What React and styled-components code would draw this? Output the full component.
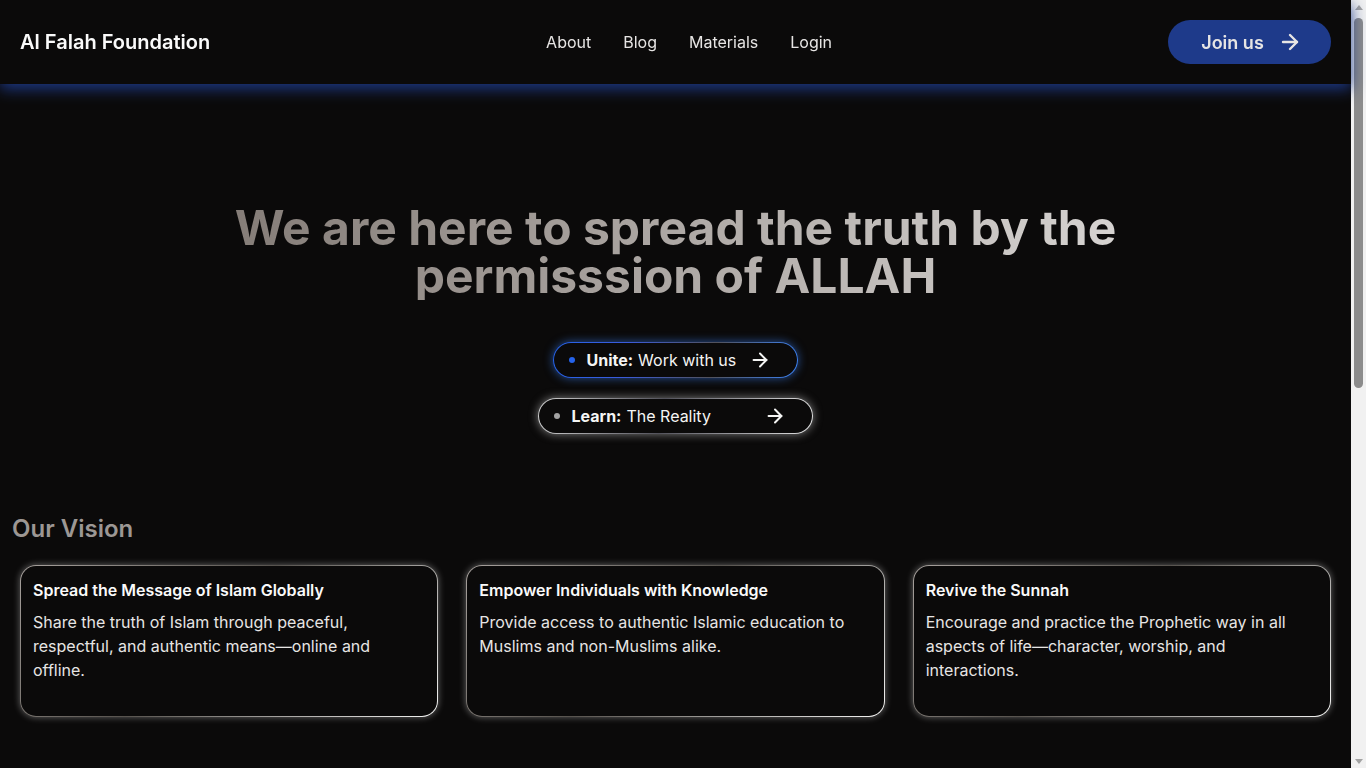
import styled, { createGlobalStyle } from "styled-components";
import { ArrowRight } from "lucide-react";

const GlobalStyle = createGlobalStyle`
  * {
    box-sizing: border-box;
  }
  body {
    margin: 0;
    background: #0b0a0a;
    color: #e7e5e4;
    font-family: Inter, "Noto Sans", sans-serif;
  }
`;

const visions = [
  {
    title: "Spread the Message of Islam Globally",
    text: "Share the truth of Islam through peaceful, respectful, and authentic means—online and offline.",
  },
  {
    title: "Empower Individuals with Knowledge",
    text: "Provide access to authentic Islamic education to Muslims and non-Muslims alike.",
  },
  {
    title: "Revive the Sunnah",
    text: "Encourage and practice the Prophetic way in all aspects of life—character, worship, and interactions.",
  },
];

const App = () => {
  return (
    <Page>
      <GlobalStyle />
      <Header>
        <Logo>Al Falah Foundation</Logo>
        <Nav>
          <NavLink href="#">About</NavLink>
          <NavLink href="#">Blog</NavLink>
          <NavLink href="#">Materials</NavLink>
          <NavLink href="#">Login</NavLink>
        </Nav>
        <JoinButton>
          Join us
          <ArrowRight size={24} strokeWidth={2.4} />
        </JoinButton>
      </Header>

      <Hero>
        <Title>
          We are here to spread the truth by the
          <br />
          permisssion of ALLAH
        </Title>
        <Actions>
          <Pill tone="blue" width={245}>
            <Label>
              <Dot tone="blue" />
              <strong>Unite:</strong> Work with us
            </Label>
            <ArrowRight size={22} strokeWidth={2.2} />
          </Pill>
          <Pill tone="white" width={275}>
            <Label>
              <Dot tone="white" />
              <strong>Learn:</strong> The Reality
            </Label>
            <ArrowRight size={22} strokeWidth={2.2} />
          </Pill>
        </Actions>
      </Hero>

      <Vision>
        <SectionTitle>Our Vision</SectionTitle>
        <Cards>
          {visions.map((v) => (
            <Card key={v.title}>
              <CardTitle>{v.title}</CardTitle>
              <CardText>{v.text}</CardText>
            </Card>
          ))}
        </Cards>
      </Vision>

      {/* the window's scrollbar, as the screenshot shows it */}
      <Scrollbar>
        <ScrollArrow dir="up" />
        <Thumb />
        <ScrollArrow dir="down" />
      </Scrollbar>
    </Page>
  );
};

const Page = styled.div`
  width: calc(100% - 15px);
  min-height: 1520px;
`;

const Header = styled.header`
  height: 84px;
  padding: 0 20px;
  display: flex;
  align-items: center;
  justify-content: space-between;
  background: #0b0a0a;
  box-shadow: 0 5px 14px rgba(30, 58, 138, 0.95);
  position: relative;
  z-index: 1;
`;

const Logo = styled.div`
  font-size: 20px;
  font-weight: 600;
  color: #fafafa;
`;

const Nav = styled.nav`
  display: flex;
  gap: 32px;
`;

const NavLink = styled.a`
  color: #e7e5e4;
  text-decoration: none;
  font-size: 16px;
`;

const JoinButton = styled.button`
  height: 44px;
  width: 163px;
  padding: 0 4px 0 8px;
  border: none;
  border-radius: 999px;
  background: #1e3a8a;
  color: #e7e5e4;
  font-family: inherit;
  font-size: 18px;
  font-weight: 600;
  display: flex;
  align-items: center;
  justify-content: center;
  gap: 14px;
  cursor: pointer;
`;

const Hero = styled.section`
  padding-top: 120px;
  display: flex;
  flex-direction: column;
  align-items: center;
`;

const Title = styled.h1`
  margin: 0;
  font-size: 48px;
  line-height: 48px;
  font-weight: 700;
  text-align: center;
  background: linear-gradient(90deg, #857d78 0%, #d6d3d1 100%);
  -webkit-background-clip: text;
  background-clip: text;
  color: transparent;
`;

const Actions = styled.div`
  margin-top: 42px;
  display: flex;
  flex-direction: column;
  align-items: center;
  gap: 20px;
`;

const Pill = styled.button`
  width: ${(p) => p.width}px;
  height: 36px;
  padding: 0 26px 0 14.5px;
  border-radius: 999px;
  border: 1.5px solid transparent;
  background: ${(p) =>
    p.tone === "blue"
      ? "linear-gradient(#0b0a0a, #0b0a0a) padding-box, linear-gradient(100deg, #2563eb 0%, #3b5bdb 30%, #52525b 65%, #3b82f6 100%) border-box"
      : "linear-gradient(#0b0a0a, #0b0a0a) padding-box, linear-gradient(100deg, #d4d4d4 0%, #52525b 45%, #e5e5e5 100%) border-box"};
  box-shadow: ${(p) =>
    p.tone === "blue"
      ? "0 0 10px rgba(59, 130, 246, 0.6)"
      : "0 0 10px rgba(245, 245, 245, 0.5)"};
  color: #f5f5f4;
  font-family: inherit;
  font-size: 16px;
  display: flex;
  align-items: center;
  justify-content: space-between;
  cursor: pointer;
`;

const Label = styled.span`
  display: flex;
  align-items: center;
  gap: 5px;
  strong {
    font-weight: 700;
  }
`;

const Dot = styled.span`
  width: 6px;
  height: 6px;
  border-radius: 50%;
  margin-right: 7px;
  background: ${(p) => (p.tone === "blue" ? "#2563eb" : "#a3a3a3")};
`;

const Vision = styled.section`
  margin-top: 79px;
  padding: 0 20px;
`;

const SectionTitle = styled.h2`
  margin: 0 0 0 -8px;
  font-size: 24px;
  line-height: 32px;
  font-weight: 600;
  color: #9c9794;
`;

const Cards = styled.div`
  margin-top: 20px;
  display: grid;
  grid-template-columns: repeat(3, 1fr);
  gap: 28px;
`;

const Card = styled.div`
  height: 152px;
  padding: 12px;
  border-radius: 16px;
  border: 1px solid transparent;
  background: linear-gradient(#0b0a0a, #0b0a0a) padding-box,
    linear-gradient(135deg, #a8a29e 0%, #57534e 45%, #f5f5f4 100%) border-box;
  box-shadow: 0 0 7px rgba(245, 245, 245, 0.4);
`;

const CardTitle = styled.h3`
  margin: 0;
  font-size: 16px;
  line-height: 24px;
  font-weight: 600;
  color: #fafafa;
`;

const CardText = styled.p`
  margin: 8px 0 0;
  font-size: 16px;
  line-height: 24px;
  color: #e7e5e4;
`;

const Scrollbar = styled.div`
  position: fixed;
  top: 0;
  right: 0;
  width: 15px;
  height: 100vh;
  background: #f1f1f1;
  display: flex;
  flex-direction: column;
  align-items: center;
  padding: 5px 0 4px;
`;

const ScrollArrow = styled.span`
  width: 0;
  height: 0;
  border-left: 4px solid transparent;
  border-right: 4px solid transparent;
  ${(p) =>
    p.dir === "up"
      ? "border-bottom: 5px solid #a3a3a3;"
      : "border-top: 5px solid #a3a3a3; margin-top: auto;"}
`;

const Thumb = styled.span`
  margin-top: 8px;
  width: 9px;
  height: 370px;
  border-radius: 5px;
  background: #8c8c8c;
`;

export default App;
